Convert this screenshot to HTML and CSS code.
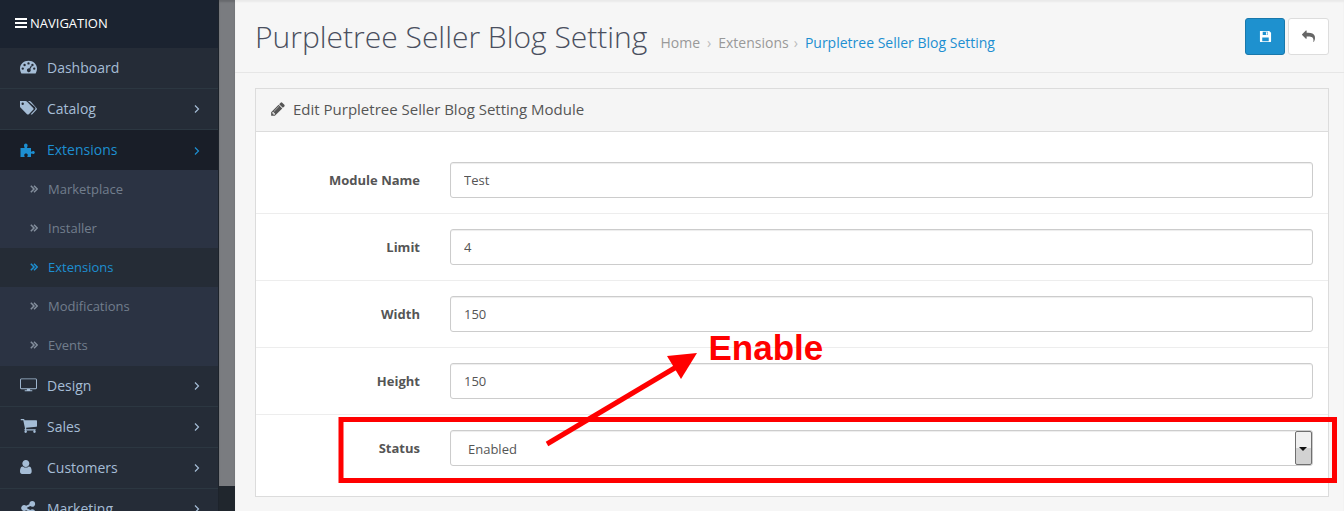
FILE: index.html
```html
<!DOCTYPE html>
<html lang="en">
<head>
    <meta charset="UTF-8">
    <title>Purpletree Seller Blog Setting</title>
    <link rel="stylesheet" href="styles.css">
</head>
<body>
    <aside class="sidebar">
        <nav class="menu">
            <div class="menu-title">
                <svg class="bars" viewBox="0 0 12 10"><path d="M0 0h12v2H0zM0 4h12v2H0zM0 8h12v2H0z"/></svg>
                <span>NAVIGATION</span>
            </div>
            <a class="menu-item">
                <svg class="menu-icon" viewBox="0 0 16 12"><path fill-rule="evenodd" d="M8 0c4.500 0 8 3.300 8 7.500 0 1.700-.5 3.200-1.300 4.500H1.300C.5 10.700 0 9.200 0 7.500 0 3.300 3.500 0 8 0zM8 1.500a1.100 1.100 0 1 0 0 2.200 1.100 1.100 0 0 0 0-2.200zM4.300 3a1.100 1.100 0 1 0 0 2.200 1.100 1.100 0 0 0 0-2.200zM11.700 3a1.100 1.100 0 1 0 0 2.200 1.100 1.100 0 0 0 0-2.200zM2.600 6.400a1.100 1.100 0 1 0 0 2.200 1.100 1.100 0 0 0 0-2.200zM13.400 6.400a1.100 1.100 0 1 0 0 2.200 1.100 1.100 0 0 0 0-2.200zM10.500 4.300 8.700 7.300a1.800 1.800 0 1 0 1 .6l1.800-3z"/></svg>
                <span class="menu-label">Dashboard</span>
            </a>
            <a class="menu-item">
                <svg class="menu-icon" viewBox="0 0 17 14"><path fill-rule="evenodd" d="M0 0h5.500c.6 0 1 .2 1.400.6l6.300 6.300c.5.500.5 1.300 0 1.800l-4.400 4.500c-.5.500-1.300.5-1.800 0L.7 6.800C.3 6.400 0 5.900 0 5.400zM2.700 1.600a1.200 1.200 0 1 0 0 2.400 1.200 1.200 0 0 0 0-2.400z"/><path d="M8 0h1.300c.6 0 1 .2 1.400.6l5.800 6.300c.5.500.5 1.300 0 1.800l-4.200 4.500c-.5.500-1.100.5-1.600.1l4.300-4.600c.7-.8.700-1.800 0-2.600z"/></svg>
                <span class="menu-label">Catalog</span>
                <svg class="angle" viewBox="0 0 6 8"><path d="M1 .5 4.500 4 1 7.500"/></svg>
            </a>
            <a class="menu-item is-active">
                <svg class="menu-icon" viewBox="0 0 16 14"><path d="M0 5h3.600c.6 0 .7-.4.400-.9-.4-.5-.5-.9-.5-1.400C3.500 1.500 4.300.6 5.300.6s1.800.9 1.800 2.100c0 .5-.1.900-.5 1.400-.3.500-.2.900.4.900H10.500v3.200c0 .5.400.7.800.4.400-.3.800-.5 1.300-.5 1 0 1.700.7 1.700 1.500s-.7 1.500-1.700 1.500c-.5 0-.9-.2-1.300-.5-.4-.3-.8-.1-.8.400V14H7.300c-.5 0-.6-.4-.4-.8.3-.4.400-.7.400-1.100 0-.9-.8-1.600-1.800-1.600s-1.800.7-1.800 1.600c0 .4.100.7.400 1.100.2.400.1.800-.4.800H0z"/></svg>
                <span class="menu-label">Extensions</span>
                <svg class="angle" viewBox="0 0 6 8"><path d="M1 .5 4.500 4 1 7.500"/></svg>
            </a>
            <ul class="submenu">
                <li class="submenu-item"><svg class="angle-double" viewBox="0 0 8 8"><path d="M.8.800 4 4 .8 7.200M4 .800 7.200 4 4 7.200"/></svg>Marketplace</li>
                <li class="submenu-item"><svg class="angle-double" viewBox="0 0 8 8"><path d="M.8.800 4 4 .8 7.200M4 .800 7.200 4 4 7.200"/></svg>Installer</li>
                <li class="submenu-item is-active"><svg class="angle-double" viewBox="0 0 8 8"><path d="M.8.800 4 4 .8 7.200M4 .800 7.200 4 4 7.200"/></svg>Extensions</li>
                <li class="submenu-item"><svg class="angle-double" viewBox="0 0 8 8"><path d="M.8.800 4 4 .8 7.200M4 .800 7.200 4 4 7.200"/></svg>Modifications</li>
                <li class="submenu-item"><svg class="angle-double" viewBox="0 0 8 8"><path d="M.8.800 4 4 .8 7.200M4 .800 7.200 4 4 7.200"/></svg>Events</li>
            </ul>
            <a class="menu-item">
                <svg class="menu-icon" viewBox="0 0 18 14"><path d="M1.500 0h15C17.300 0 18 .7 18 1.500v8.500c0 .8-.7 1.500-1.500 1.500h-5.800v1h2.300v1H5v-1h2.300v-1H1.500C.7 11.500 0 10.800 0 10V1.500C0 .7.700 0 1.500 0zm0 1a.5.500 0 0 0-.5.500V10c0 .3.200.5.500.5h15c.3 0 .5-.2.500-.5V1.500a.5.500 0 0 0-.5-.5z"/></svg>
                <span class="menu-label">Design</span>
                <svg class="angle" viewBox="0 0 6 8"><path d="M1 .5 4.500 4 1 7.500"/></svg>
            </a>
            <a class="menu-item">
                <svg class="menu-icon" viewBox="0 256 1728 1408" preserveAspectRatio="xMinYMid"><path d="M704 1536q0 52-38 90t-90 38-90-38-38-90 38-90 90-38 90 38 38 90zm896 0q0 52-38 90t-90 38-90-38-38-90 38-90 90-38 90 38 38 90zm128-1088v512q0 24-16.500 42.500t-40.500 21.500l-1044 122q13 60 13 70 0 16-24 64h920q26 0 45 19t19 45-19 45-45 19h-1024q-26 0-45-19t-19-45q0-11 8-31.500t16-36 21.500-40 15.500-29.500l-177-823h-204q-26 0-45-19t-19-45 19-45 45-19h256q16 0 28.500 6.500t19.500 15.500 13 24.500 8 26 5.500 29.500 4.500 26h1201q26 0 45 19t19 45z"/></svg>
                <span class="menu-label">Sales</span>
                <svg class="angle" viewBox="0 0 6 8"><path d="M1 .5 4.500 4 1 7.500"/></svg>
            </a>
            <a class="menu-item">
                <svg class="menu-icon" viewBox="256 128 1280 1536" preserveAspectRatio="xMinYMid"><path d="M1536 1399q0 109-62.500 187t-150.500 78h-854q-88 0-150.500-78t-62.500-187q0-85 8.500-160.500t31.500-152 58.500-131 94-89 134.500-34.500q131 128 313 128t313-128q76 0 134.500 34.500t94 89 58.500 131 31.500 152 8.500 160.500zm-256-887q0 159-112.500 271.500t-271.500 112.500-271.500-112.500-112.500-271.500 112.500-271.500 271.500-112.500 271.500 112.500 112.500 271.500z"/></svg>
                <span class="menu-label">Customers</span>
                <svg class="angle" viewBox="0 0 6 8"><path d="M1 .5 4.500 4 1 7.500"/></svg>
            </a>
            <a class="menu-item">
                <svg class="menu-icon" viewBox="0 128 1664 1536" preserveAspectRatio="xMinYMid"><path d="M1344 1024q133 0 226.500 93.500t93.500 226.500-93.500 226.500-226.500 93.500-226.500-93.500-93.500-226.500q0-12 2-34l-360-180q-92 86-218 86-133 0-226.500-93.500t-93.500-226.500 93.500-226.500 226.500-93.500q126 0 218 86l360-180q-2-22-2-34 0-133 93.500-226.500t226.500-93.500 226.500 93.500 93.500 226.500-93.500 226.500-226.500 93.500q-126 0-218-86l-360 180q2 22 2 34t-2 34l360 180q92-86 218-86z"/></svg>
                <span class="menu-label">Marketing</span>
                <svg class="angle" viewBox="0 0 6 8"><path d="M1 .5 4.500 4 1 7.500"/></svg>
            </a>
        </nav>
        <div class="rail"><div class="rail-thumb"></div></div>
    </aside>

    <main class="content">
        <header class="page-header">
            <h1>Purpletree Seller Blog Setting</h1>
            <ul class="breadcrumb">
                <li>Home</li>
                <li>Extensions</li>
                <li class="current">Purpletree Seller Blog Setting</li>
            </ul>
            <div class="actions">
                <button class="btn btn-primary">
                    <svg viewBox="0 0 14 14"><path fill-rule="evenodd" d="M1 1h10l2 2v9a1 1 0 0 1-1 1H2a1 1 0 0 1-1-1zM4 2v3.500h5.500V2zM7.500 2.500H9v2.500H7.500zM3.500 8v4h7V8z"/></svg>
                </button>
                <button class="btn btn-default">
                    <svg viewBox="0 0 1792 1792"><path d="M1792 1120q0 166-127 451-3 7-10.500 24t-13.500 30-13 22q-12 17-28 17-15 0-23.500-10t-8.500-25q0-9 2.500-26.500t2.500-23.500q5-68 5-123 0-101-17.500-181t-48.500-138.500-80-101-105.500-69.500-133-42.500-154-21.500-175.500-6h-224v256q0 26-19 45t-45 19-45-19l-512-512q-19-19-19-45t19-45l512-512q19-19 45-19t45 19 19 45v256h224q713 0 875 403 53 134 53 333z"/></svg>
                </button>
            </div>
        </header>

        <section class="panel">
            <div class="panel-heading">
                <svg class="pencil" viewBox="0 0 1792 1792"><path d="M491 1536l91-91-235-235-91 91v107h128v128h107zm523-928q0-22-22-22-10 0-17 7l-542 542q-7 7-7 17 0 22 22 22 10 0 17-7l542-542q7-7 7-17zm-54-192l416 416-832 832h-416v-416zm683 96q0 53-37 90l-166 166-416-416 166-165q36-38 90-38 53 0 91 38l235 234q37 39 37 91z"/></svg>
                <h3>Edit Purpletree Seller Blog Setting Module</h3>
            </div>
            <form class="panel-body">
                <div class="form-row">
                    <label>Module Name</label>
                    <input class="field" type="text" value="Test">
                </div>
                <div class="form-row">
                    <label>Limit</label>
                    <input class="field" type="text" value="4">
                </div>
                <div class="form-row">
                    <label>Width</label>
                    <input class="field" type="text" value="150">
                </div>
                <div class="form-row">
                    <label>Height</label>
                    <input class="field" type="text" value="150">
                </div>
                <div class="form-row">
                    <label>Status</label>
                    <div class="select-wrap">
                        <select class="field field-select">
                            <option>Enabled</option>
                            <option>Disabled</option>
                        </select>
                        <span class="select-arrow"></span>
                    </div>
                </div>
            </form>
        </section>
    </main>

    <!-- red notes drawn over the screenshot -->
    <svg class="markup" viewBox="0 0 1344 511">
        <rect x="341" y="419.500" width="993.500" height="61" fill="none" stroke="#ff0000" stroke-width="5"/>
        <path d="M547 444 678 366" fill="none" stroke="#ff0000" stroke-width="5"/>
        <path d="M667 356 697 353 681 379z" fill="#ff0000"/>
    </svg>
    <div class="markup-text">Enable</div>
</body>
</html>
```

FILE: styles.css
```css
* {
    box-sizing: border-box;
}
html, body {
    height: 100%;
}
body {
    margin: 0;
    display: flex;
    overflow: hidden;
    font-family: "Open Sans", sans-serif;
    font-size: 13px;
    color: #555;
    background: #f6f6f6;
}

/* sidebar */
.sidebar {
    display: flex;
    flex: 0 0 235px;
    height: 511px;
    overflow: hidden;
}
.menu {
    flex: 0 0 219px;
    background: #252c37;
    border-right: 1px solid #1d232b;
}
.menu-title {
    display: flex;
    align-items: center;
    gap: 3px;
    height: 48px;
    padding: 0 0 2px 15px;
    background: #1b2330;
    color: #fff;
    font-size: 13px;
}
.bars {
    width: 12px;
    height: 10px;
    fill: #fff;
}
.menu-item {
    display: flex;
    align-items: center;
    height: 41px;
    padding: 0 18px 2px 20px;
    border-bottom: 1px solid #2c3741;
    color: #a5bdd6;
    font-size: 14px;
}
.menu-icon {
    flex: 0 0 17px;
    width: 17px;
    height: 14px;
    fill: #a5bdd6;
}
.menu-label {
    flex: 1;
    margin-left: 10px;
}
.angle {
    width: 6px;
    height: 8px;
    margin-top: 2px;
    fill: none;
    stroke: #a5bdd6;
    stroke-width: 1.200;
}
.menu-item.is-active {
    height: 40px;
    padding-bottom: 1px;
    background: #191e28;
    border-bottom: 0;
    color: #1d8fd1;
}
.menu-item.is-active .menu-icon {
    fill: #1d8fd1;
}
.menu-item.is-active .angle {
    stroke: #1d8fd1;
}
.submenu {
    margin: 0;
    padding: 0 0 1px;
    list-style: none;
    background: #2b3343;
}
.submenu-item {
    display: flex;
    align-items: center;
    height: 39px;
    padding: 0 0 2px 30px;
    color: #727e8d;
    font-size: 13px;
}
.angle-double {
    width: 8px;
    height: 8px;
    margin-right: 10px;
    fill: none;
    stroke: #838e9c;
    stroke-width: 1.500;
}
.submenu-item.is-active {
    background: #252c36;
    color: #1d8fd1;
}
.submenu-item.is-active .angle-double {
    stroke: #1d8fd1;
}
.rail {
    flex: 0 0 16px;
    background: #20262d;
}
.rail-thumb {
    height: 486px;
    background: #7a7c80;
    box-shadow: inset 0 2px 2px rgba(0, 0, 0, 0.15);
}

/* page */
.content {
    flex: 1;
    min-width: 0;
    box-shadow: inset 0 2px 2px rgba(0, 0, 0, 0.05);
}
.page-header {
    display: flex;
    align-items: center;
    height: 73px;
    padding: 0 15px 0 20px;
    border-bottom: 1px solid #e6e6e6;
}
.page-header h1 {
    margin: 0;
    font-size: 30px;
    font-weight: 300;
    color: #4a4f5e;
}
.breadcrumb {
    display: flex;
    margin: 13px 0 0 13px;
    padding: 0;
    list-style: none;
    font-size: 14px;
    color: #999;
}
.breadcrumb li + li {
    margin-left: 1px;
}
.breadcrumb li + li::before {
    content: "›";
    margin: 0 7px 0 6px;
    color: #bbb;
}
.breadcrumb .current {
    margin-left: -1px;
    color: #1d8fd1;
}
.actions {
    display: flex;
    gap: 3px;
    margin-left: auto;
}
.btn {
    display: flex;
    align-items: center;
    justify-content: center;
    width: 40px;
    height: 37px;
    padding: 0;
    border-radius: 3px;
}
.btn svg {
    width: 13px;
    height: 13px;
}
.btn-primary {
    background: #1e91cf;
    border: 1px solid #1978ab;
}
.btn-primary svg {
    fill: #fff;
}
.btn-default {
    width: 41px;
    background: #fff;
    border: 1px solid #ddd;
}
.btn-default svg {
    fill: #666;
}

/* panel and form */
.panel {
    margin: 15px 15px 0 20px;
    background: #fff;
    border: 1px solid #dcdcdc;
}
.panel-heading {
    display: flex;
    align-items: center;
    gap: 7px;
    height: 43px;
    padding: 0 0 2px 14px;
    background: #f5f5f5;
    border-bottom: 1px solid #dcdcdc;
}
.pencil {
    width: 16px;
    height: 16px;
    fill: #555;
}
.panel-heading h3 {
    margin: 0;
    font-size: 15px;
    font-weight: 400;
    color: #555;
}
.panel-body {
    padding: 15px 0;
}
.form-row {
    display: flex;
    align-items: center;
    padding: 15px;
    border-top: 1px solid #ededed;
}
.form-row:first-child {
    border-top: 0;
}
.form-row label {
    flex: 0 0 149px;
    font-weight: 700;
    text-align: right;
    color: #555;
}
.field {
    flex: 1;
    width: 100%;
    height: 36px;
    margin-left: 30px;
    padding: 0 13px;
    border: 1px solid #ccc;
    border-radius: 3px;
    background: #fff;
    font-family: inherit;
    font-size: 13px;
    color: #555;
    box-shadow: inset 0 1px 1px rgba(0, 0, 0, 0.075);
}
.select-wrap {
    position: relative;
    flex: 1;
    display: flex;
    margin-left: 30px;
}
.field-select {
    margin-left: 0;
    padding: 2px 0 0 17px;
    appearance: none;
}
/* old style dropdown button */
.select-arrow {
    position: absolute;
    top: 1px;
    right: 1px;
    width: 17px;
    height: 34px;
    border: 1px solid #6f6f6f;
    border-radius: 2px;
    background: linear-gradient(#f0f0f0 50%, #d2d2d2 50%);
}
.select-arrow::after {
    content: "";
    position: absolute;
    top: 15px;
    left: 3px;
    border-style: solid;
    border-width: 4px 4px 0;
    border-color: #111 transparent transparent;
}

/* red annotation, sits over the page */
.markup {
    position: absolute;
    top: 0;
    left: 0;
    width: 1344px;
    height: 511px;
    pointer-events: none;
}
.markup-text {
    position: absolute;
    top: 328px;
    left: 708.500px;
    font-family: "Liberation Sans", Arial, sans-serif;
    font-size: 35px;
    font-weight: 700;
    line-height: 40px;
    color: #ff0000;
}
```
